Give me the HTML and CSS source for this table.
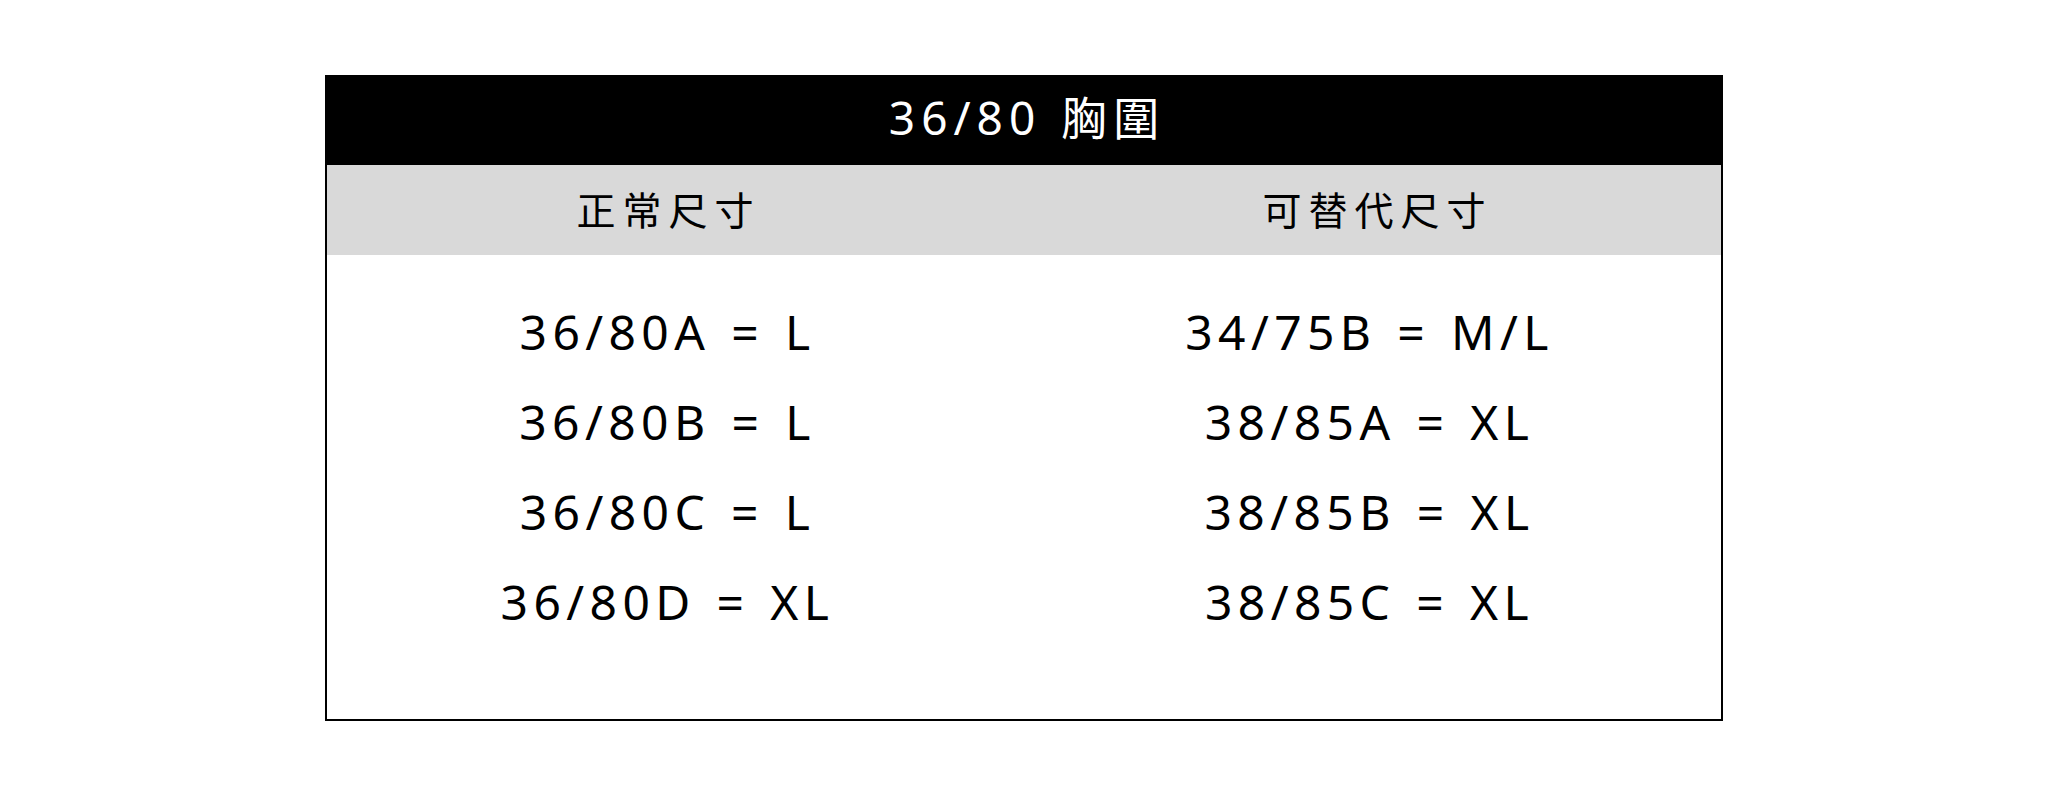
FILE: index.html
```html
<!DOCTYPE html>
<html lang="zh-Hant">
<head>
<meta charset="utf-8">
<title>36/80 胸圍</title>
<link rel="stylesheet" href="styles.css">
</head>
<body>
<div class="page">
  <section class="size-table">
    <h1 class="title">36/80 胸圍</h1>
    <div class="head-row">
      <div class="head-cell">正常尺寸</div>
      <div class="head-cell">可替代尺寸</div>
    </div>
    <div class="body-grid">
      <ul class="col">
        <li>36/80A = L</li>
        <li>36/80B = L</li>
        <li>36/80C = L</li>
        <li>36/80D = XL</li>
      </ul>
      <ul class="col">
        <li>34/75B = M/L</li>
        <li>38/85A = XL</li>
        <li>38/85B = XL</li>
        <li>38/85C = XL</li>
      </ul>
    </div>
  </section>
</div>
</body>
</html>
```
FILE: styles.css
```css
html, body {
  margin: 0;
  padding: 0;
  background: #ffffff;
}

body {
  font-family: "Noto Sans", "Noto Sans CJK TC", sans-serif;
  color: #000000;
}

.page {
  padding-top: 75px;
}

.size-table {
  box-sizing: border-box;
  width: 1398px;
  height: 646px;
  margin: 0 auto;
  border: 2px solid #000000;
  background: #ffffff;
}

.title {
  box-sizing: border-box;
  margin: 0;
  height: 88px;
  padding: 0 0 12px 6px;
  background: #000000;
  color: #ffffff;
  font-weight: 400;
  font-size: 46px;
  letter-spacing: 6px;
  word-spacing: 2px;
  display: flex;
  align-items: center;
  justify-content: center;
}

.head-row {
  box-sizing: border-box;
  height: 90px;
  padding-bottom: 5px;
  background: #d9d9d9;
  display: grid;
  grid-template-columns: 683px 683px;
  column-gap: 26px;
  align-items: center;
}

.head-cell {
  font-family: "Noto Sans CJK TC", sans-serif;
  font-size: 39px;
  letter-spacing: 7px;
  text-align: center;
}

.body-grid {
  display: grid;
  grid-template-columns: 681px 681px;
  column-gap: 21px;
  padding-top: 32px;
}

.col {
  list-style: none;
  margin: 0;
  padding: 0;
}

.col li {
  height: 90px;
  line-height: 90px;
  font-size: 48px;
  letter-spacing: 5.4px;
  word-spacing: 3px;
  text-align: center;
}
```
